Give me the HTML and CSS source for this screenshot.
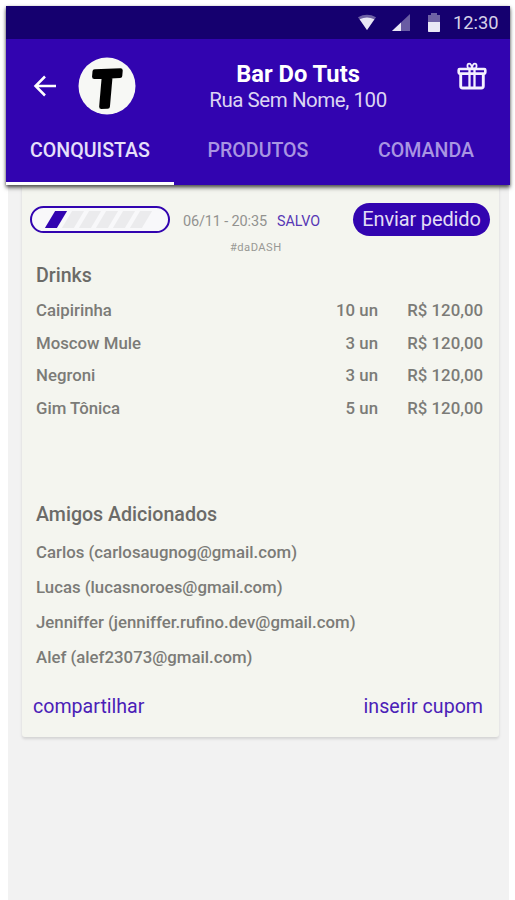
FILE: index.html
```html
<!DOCTYPE html>
<html lang="pt-BR">
<head>
<meta charset="utf-8">
<title>Bar Do Tuts</title>
<link rel="stylesheet" href="styles.css">
</head>
<body>
<div class="phone">
  <header class="appbar">
    <div class="status">
      <svg class="wifi" width="20" height="17" viewBox="0 0 20 17"><path d="M1 3.200Q10-1.600 19 3.200L10 16z" fill="#fff" opacity=".38"/><path d="M2.600 5.200Q10 2 17.400 5.200L10 16z" fill="#e9e7f5"/></svg>
      <svg class="signal" width="18" height="17" viewBox="0 0 18 17"><path d="M18 0v17H0z" fill="#fff" opacity=".36"/><path d="M9 8.500V17H0z" fill="#e9e7f5"/></svg>
      <svg class="battery" width="12" height="19" viewBox="0 0 12 19"><path d="M3 0h6v2h3v7H0V2h3z" fill="#fff" opacity=".38"/><path d="M0 9h12v9.200q0 .8-.8.8H.8q-.8 0-.8-.8z" fill="#e9e7f5"/></svg>
      <span class="clock">12:30</span>
    </div>
    <div class="title-row">
      <svg class="back" width="24" height="22" viewBox="0 0 24 22"><path d="M23 11H2.500M12 1.500L2.500 11l9.500 9.500" fill="none" stroke="#fff" stroke-width="2.500"/></svg>
      <svg class="logo" width="58" height="58" viewBox="0 0 58 58"><circle cx="29" cy="29" r="28.500"/><text x="14" y="49.500" transform="rotate(-2 29 29)">T</text></svg>
      <div class="place"><h1>Bar Do Tuts</h1><p>Rua Sem Nome, 100</p></div>
      <svg class="gift" width="30" height="28" viewBox="0 0 30 28" fill="none" stroke="#f4f0ff"><rect x="1.700" y="7" width="26.600" height="4.600" rx="1" stroke-width="2.600"/><path d="M3.700 12v12q0 2 2 2h18.600q2 0 2-2V12" stroke-width="2.900"/><path d="M12.500 7v19M17.500 7v19" stroke-width="2.300"/><path d="M15 6.500H11Q9.500 1.700 12 1.700T15 6.500Q15.500 1.700 18 1.700T19 6.500z" stroke-width="1.800"/></svg>
    </div>
    <nav class="tabs"><a class="on">CONQUISTAS</a><a>PRODUTOS</a><a>COMANDA</a></nav>
  </header>
  <main class="page">
    <section class="card">
      <div class="order">
        <div class="progress"><i class="full"></i><i></i><i></i><i></i><i></i><i></i></div>
        <span class="date">06/11 - 20:35</span><span class="saved">SALVO</span>
        <button>Enviar pedido</button>
      </div>
      <p class="tag">#daDASH</p>
      <h2 class="h-drinks">Drinks</h2>
      <div class="items">
        <div class="item"><span>Caipirinha</span><span>10 un</span><span>R$ 120,00</span></div>
        <div class="item"><span>Moscow Mule</span><span>3 un</span><span>R$ 120,00</span></div>
        <div class="item"><span>Negroni</span><span>3 un</span><span>R$ 120,00</span></div>
        <div class="item"><span>Gim Tônica</span><span>5 un</span><span>R$ 120,00</span></div>
      </div>
      <h2 class="h-friends">Amigos Adicionados</h2>
      <ul class="friends">
        <li>Carlos (carlosaugnog@gmail.com)</li>
        <li>Lucas (lucasnoroes@gmail.com)</li>
        <li>Jenniffer (jenniffer.rufino.dev@gmail.com)</li>
        <li>Alef (alef23073@gmail.com)</li>
      </ul>
      <div class="actions"><a>compartilhar</a><a>inserir cupom</a></div>
    </section>
  </main>
</div>
</body>
</html>
```
FILE: styles.css
```css
* { box-sizing: border-box; margin: 0; padding: 0; }
body { width: 515px; height: 900px; overflow: hidden; background: #fff; font-family: Roboto, "Liberation Sans", sans-serif; }
svg { display: block; flex: none; }
.phone { width: 504px; height: 900px; margin-left: 6px; padding-top: 6px; display: flex; flex-direction: column; }
.appbar { flex: none; height: 179px; background: #3204b0; box-shadow: 0 3px 4px rgba(0,0,0,.5), 0 1px 3px rgba(0,0,0,.4); position: relative; }
.status { height: 33px; background: #15006f; display: flex; align-items: center; padding-left: 351px; }
.signal { margin-left: 15px; }
.battery { margin-left: 18px; }
.clock { margin-left: 13px; font-size: 18.300px; line-height: 34px; padding-top: 1px; color: #d6d1e8; white-space: nowrap; }
.title-row { display: flex; align-items: center; height: 93px; padding: 0 23px 0 27px; }
.logo { margin-left: 21px; overflow: visible; }
.logo circle { fill: #f7f8f5; }
.logo text { font: italic 700 49px Lato, sans-serif; fill: #000; stroke: #000; stroke-width: 4.500px; stroke-linejoin: round; }
.place { width: 180px; margin-left: 72px; padding-top: 2px; text-align: center; color: #fff; white-space: nowrap; }
.place h1 { font-size: 23.700px; line-height: 27px; font-weight: 700; }
.place p { font-size: 20.500px; letter-spacing: -.45px; line-height: 25px; color: #dcd5f2; }
.gift { margin-left: auto; margin-top: -19px; }
.tabs { height: 53px; display: grid; grid-template-columns: repeat(3, 168px); }
.tabs a { display: flex; justify-content: center; padding-top: 7px; font-size: 19.600px; line-height: 23px; font-weight: 500; color: #a995e2; }
.tabs .on { color: #e7e0fa; border-bottom: 3px solid #fff; }
.page { flex: 1; margin: 0 1px 0 2px; padding-left: 14px; background: #f2f2f2; }
.card { width: 477px; height: 552px; background: #f4f5ef; border-radius: 0 0 3px 3px; box-shadow: 0 2px 3px rgba(0,0,0,.13); color: #7b7b77; padding-top: 17px; }
.order { display: flex; height: 35px; align-items: center; padding-left: 8px; white-space: nowrap; }
.progress { flex: none; width: 140px; height: 27px; border: 2px solid #3204b0; border-radius: 14px; background: #f8f8fa; display: flex; gap: 5px; padding: 3px 0 0 18px; }
.progress i { flex: none; width: 12px; height: 17px; transform: skewX(-31deg); background: #ebebed; }
.progress .full { background: #3204b0; }
.date { margin-left: 13px; width: 84px; font-size: 14.500px; letter-spacing: -.15px; padding-top: 3px; color: #92928f; }
.saved { margin-left: 10px; width: 43px; font-size: 14.300px; padding-top: 3px; color: #5637b5; }
button { margin-left: 33px; flex: none; width: 137px; height: 33px; border: 0; border-radius: 17px; background: #3204b0; color: #e2dcf5; font: 20px/30px Roboto, sans-serif; letter-spacing: -.15px; padding-bottom: 2px; }
.tag { margin-left: 208px; font-size: 11.200px; letter-spacing: .45px; line-height: 16px; margin-top: 3px; color: #999995; }
h2 { margin-left: 14px; font-size: 19.600px; line-height: 26px; font-weight: 500; color: #6b6b68; }
.h-drinks { margin-top: 7px; }
.items { margin-top: 5px; font-weight: 500; }
.item { height: 32.600px; display: grid; grid-template-columns: 242px 100px 105px; padding-left: 14px; align-items: center; font-size: 16.800px; }
.item span + span { text-align: right; }
.h-friends { margin-top: 77.600px; }
.friends { margin-top: 6.800px; list-style: none; padding-left: 14px; font-size: 16.800px; font-weight: 500; }
.friends li { height: 35.200px; line-height: 35px; }
.actions { display: flex; justify-content: space-between; padding: 18px 16px 0 11px; font-size: 19.600px; line-height: 25px; color: #4a20b7; }
```
